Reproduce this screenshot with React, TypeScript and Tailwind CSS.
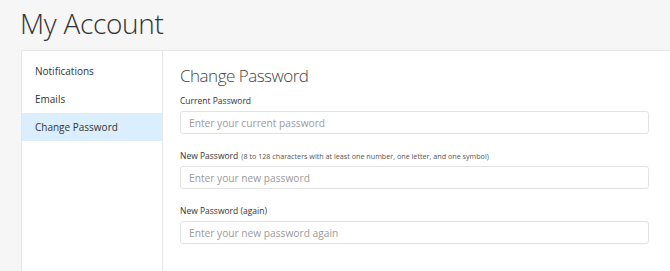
const navItems = ['Notifications', 'Emails', 'Change Password'];

const fields = [
  { label: 'Current Password', hint: '', placeholder: 'Enter your current password' },
  {
    label: 'New Password',
    hint: '(8 to 128 characters with at least one number, one letter, and one symbol)',
    placeholder: 'Enter your new password',
  },
  { label: 'New Password (again)', hint: '', placeholder: 'Enter your new password again' },
];

export default function App() {
  return (
    <div
      className="h-[271px] w-[670px] overflow-hidden bg-[#f6f6f6] text-[#333]"
      style={{ fontFamily: '"Open Sans", "Noto Sans", sans-serif' }}
    >
      <h1 className="pl-[20px] pt-[3px] text-[28px] font-light leading-[40px] tracking-[-0.3px] text-[#333]">
        My Account
      </h1>
      <div className="ml-[21px] mt-[7px] flex h-[260px] w-[680px] border border-[#e6e6e6] bg-white">
        <nav className="w-[141px] shrink-0 border-r border-[#e6e6e6] pt-[6px]">
          {navItems.map((item) => (
            <div
              key={item}
              className={
                item === 'Change Password'
                  ? 'flex h-[28px] items-center bg-[#dbeefd] pl-[13px] text-[10px] text-[#333]'
                  : 'flex h-[28px] items-center pl-[13px] text-[10px] text-[#333]'
              }
            >
              {item}
            </div>
          ))}
        </nav>
        <div className="flex-1 pl-[17px] pt-[13px]">
          <h2 className="text-[17px] font-light leading-[24px] tracking-[-0.5px] text-[#444]">
            Change Password
          </h2>
          <form className="mt-[6px] flex flex-col gap-[15px]">
            {fields.map((f) => (
              <div key={f.placeholder}>
                <label className="block text-[8.5px] leading-[14px] text-[#333]">
                  {f.label}
                  {f.hint && <span className="ml-[3px] text-[7.2px] text-[#555]">{f.hint}</span>}
                </label>
                <input
                  type="password"
                  placeholder={f.placeholder}
                  className="mt-[3px] block h-[23px] w-[469px] rounded-[3px] border border-[#e3e3e3] px-[8px] text-[10.2px] outline-none placeholder:text-[#9a9a9a]"
                />
              </div>
            ))}
          </form>
        </div>
      </div>
    </div>
  );
}
